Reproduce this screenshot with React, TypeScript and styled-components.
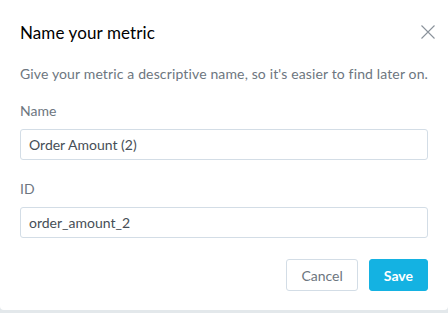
import { useState } from "react";
import styled, { createGlobalStyle } from "styled-components";

const GlobalStyle = createGlobalStyle`
  html, body {
    margin: 0;
    padding: 0;
    background: #e3e8eb;
  }
  body {
    font-family: Lato, "Noto Sans", sans-serif;
  }
`;

const Dialog = styled.div`
  width: 448px;
  height: 310px;
  box-sizing: border-box;
  background: #fff;
  border-radius: 0 0 4px 4px;
  padding: 22px 20px 0 20px;
  display: flex;
  flex-direction: column;
`;

const Header = styled.div`
  display: flex;
  align-items: center;
  justify-content: space-between;
  height: 20px;
`;

const Title = styled.h2`
  margin: 0;
  font-size: 17px;
  font-weight: 400;
  color: #000;
  letter-spacing: 0.1px;
`;

const CloseButton = styled.button`
  border: 0;
  background: none;
  padding: 0;
  margin-right: -8px;
  width: 16px;
  height: 16px;
  cursor: pointer;
  display: flex;
`;

const Description = styled.p`
  margin: 22px 0 0 0;
  font-size: 14px;
  line-height: 20px;
  letter-spacing: 0.14px;
  white-space: nowrap;
  color: #6d7680;
`;

const Label = styled.label<{ $top: number }>`
  display: block;
  margin-top: ${(props) => props.$top}px;
  font-size: 14px;
  line-height: 20px;
  color: #6d7680;
`;

const Input = styled.input`
  display: block;
  margin-top: 8px;
  width: 100%;
  height: 31px;
  box-sizing: border-box;
  border: 1px solid #d3dde6;
  border-radius: 3px;
  padding: 0 8px;
  font-family: inherit;
  font-size: 14px;
  color: #464e56;
  outline: none;
`;

const Actions = styled.div`
  display: flex;
  justify-content: flex-end;
  gap: 11px;
  margin-top: 21px;
`;

const Button = styled.button<{ $primary?: boolean }>`
  height: 32px;
  box-sizing: border-box;
  padding: 0 14px;
  border-radius: 3px;
  font-family: inherit;
  font-size: 14px;
  font-weight: ${(props) => (props.$primary ? 700 : 400)};
  border: 1px solid ${(props) => (props.$primary ? "#14b2e2" : "#d3dde6")};
  background: ${(props) => (props.$primary ? "#14b2e2" : "#fff")};
  color: ${(props) => (props.$primary ? "#fff" : "#6d7680")};
  cursor: pointer;
`;

function App() {
  const [name, setName] = useState("Order Amount (2)");
  const [id, setId] = useState("order_amount_2");

  return (
    <>
      <GlobalStyle />
      <Dialog>
        <Header>
          <Title>Name your metric</Title>
          <CloseButton aria-label="Close">
            <svg width="16" height="16" viewBox="0 0 16 16">
              <path d="M1.5 1.5 L14.5 14.5 M14.5 1.5 L1.5 14.5" stroke="#8a929b" strokeWidth="1.1" fill="none" />
            </svg>
          </CloseButton>
        </Header>
        <Description>
          Give your metric a descriptive name, so it's easier to find later on.
        </Description>
        <Label $top={17}>Name</Label>
        <Input value={name} onChange={(e) => setName(e.target.value)} />
        <Label $top={19}>ID</Label>
        <Input value={id} onChange={(e) => setId(e.target.value)} />
        <Actions>
          <Button>Cancel</Button>
          <Button $primary>Save</Button>
        </Actions>
      </Dialog>
    </>
  );
}

export default App;
